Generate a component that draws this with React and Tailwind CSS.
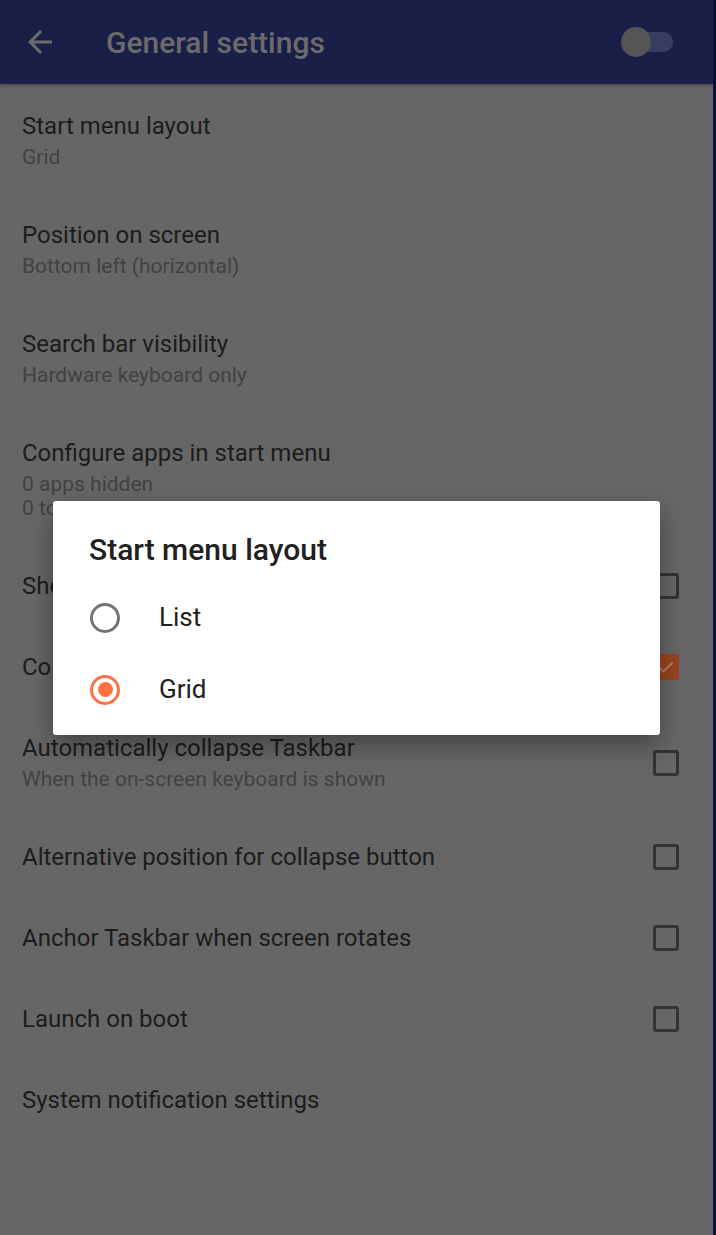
import { useState } from "react";

const rows = [
  { title: "Start menu layout", sub: ["Grid"] },
  { title: "Position on screen", sub: ["Bottom left (horizontal)"] },
  { title: "Search bar visibility", sub: ["Hardware keyboard only"] },
  { title: "Configure apps in start menu", sub: ["0 apps hidden", "0 top apps"] },
  { title: "Show search bar in start menu", check: false },
  { title: "Collapse Taskbar on start menu close", check: true },
  {
    title: "Automatically collapse Taskbar",
    sub: ["When the on-screen keyboard is shown"],
    check: false,
  },
  { title: "Alternative position for collapse button", check: false },
  { title: "Anchor Taskbar when screen rotates", check: false },
  { title: "Launch on boot", check: false },
  { title: "System notification settings" },
];

const Checkbox = ({ checked }) =>
  checked ? (
    <div className="w-[26px] h-[26px] rounded-[3px] bg-[#99431f] flex items-center justify-center">
      <svg width="20" height="20" viewBox="0 0 24 24">
        <path
          d="M4 12.5l5 5L20 6.5"
          fill="none"
          stroke="#b07a64"
          strokeWidth="2.6"
        />
      </svg>
    </div>
  ) : (
    <div className="w-[26px] h-[26px] rounded-[3px] border-[3px] border-[#333333]" />
  );

const Radio = ({ checked }) => (
  <div
    className={`w-[30px] h-[30px] rounded-full border-[3px] flex items-center justify-center ${
      checked ? "border-[#ff7043]" : "border-[#757575]"
    }`}
  >
    {checked ? <div className="w-[15px] h-[15px] rounded-full bg-[#ff7043]" /> : null}
  </div>
);

const App = () => {
  const [layout, setLayout] = useState("Grid");

  return (
    <div
      className="flex w-[716px] h-[1235px] overflow-hidden bg-[#666666]"
      style={{ fontFamily: "Roboto, 'Noto Sans', sans-serif" }}
    >
      <div className="relative flex-1 flex flex-col">
        {/* toolbar */}
        <div className="h-[84px] bg-[#1a1f48] flex items-center shrink-0 shadow-[0_2px_3px_rgba(0,0,0,0.25)]">
          <svg width="36" height="36" viewBox="0 0 24 24" className="ml-[22px]">
            <path
              d="M20 11H7.83l5.59-5.59L12 4l-8 8 8 8 1.41-1.41L7.83 13H20v-2z"
              fill="#6b6b6b"
            />
          </svg>
          <div className="ml-[48px] mt-[2px] text-[30px] font-medium text-[#6b6b6b] leading-none">
            General settings
          </div>
          <div className="ml-auto mr-[40px] relative w-[52px] h-[30px] flex items-center">
            <div className="absolute right-0 w-[44px] h-[20px] rounded-full bg-[#383d60]" />
            <div className="absolute left-0 w-[30px] h-[30px] rounded-full bg-[#555555]" />
          </div>
        </div>

        {/* settings list */}
        <div className="flex flex-col">
          {rows.map((row, index) => (
            <div
              key={index}
              className={`flex items-center pl-[22px] pr-[34px] pt-[28px] ${
                row.sub ? "pb-[24px]" : "pb-[25px]"
              }`}
            >
              <div className="flex-1 min-w-0">
                <div className="text-[24px] leading-[28px] text-[#1c1c1c] whitespace-nowrap">
                  {row.title}
                </div>
                {row.sub ? (
                  <div className="mt-[5px]">
                    {row.sub.map((line) => (
                      <div key={line} className="text-[21px] leading-[24px] text-[#424242]">
                        {line}
                      </div>
                    ))}
                  </div>
                ) : null}
              </div>
              {row.check !== undefined ? <Checkbox checked={row.check} /> : null}
            </div>
          ))}
        </div>

        {/* dialog */}
        <div className="absolute inset-0 flex items-center justify-center">
          <div className="w-[607px] bg-white rounded-[3px] shadow-[0_10px_24px_rgba(0,0,0,0.35)] pt-[31px] pb-[9px]">
            <div className="px-[36px] text-[30px] leading-[36px] font-medium text-[#212121]">
              Start menu layout
            </div>
            <div className="mt-[14px]">
              {["List", "Grid"].map((item) => (
                <div
                  key={item}
                  onClick={() => setLayout(item)}
                  className="h-[72px] flex items-center pl-[37px]"
                >
                  <Radio checked={layout === item} />
                  <span className="ml-[39px] text-[26px] text-[#212121]">{item}</span>
                </div>
              ))}
            </div>
          </div>
        </div>
      </div>
      <div className="w-[3px] bg-[#0f1038]" />
    </div>
  );
};

export default App;
